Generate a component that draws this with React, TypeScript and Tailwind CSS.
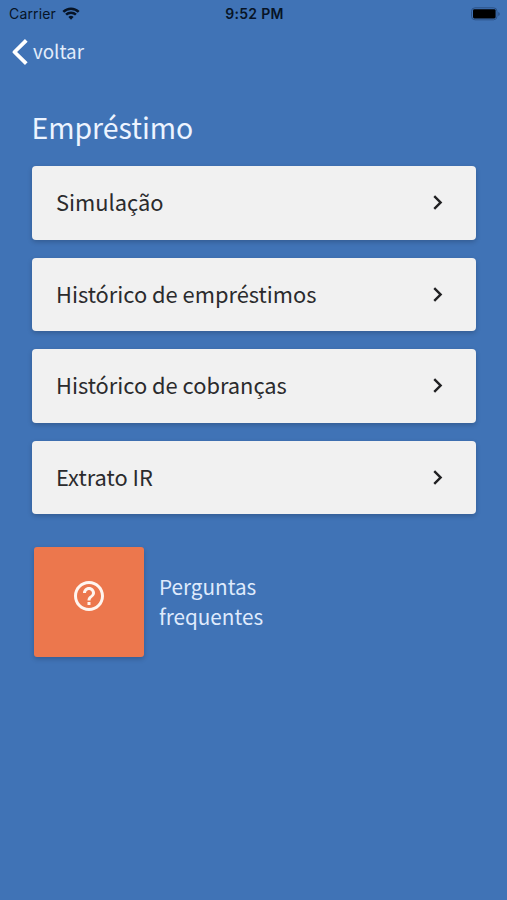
import { MdHelpOutline, MdKeyboardArrowRight } from "react-icons/md";

const menuItems = [
  "Simulação",
  "Histórico de empréstimos",
  "Histórico de cobranças",
  "Extrato IR",
];

function StatusBar() {
  return (
    <div className="grid h-7 grid-cols-3 items-center pb-px pl-[9px] pr-[7px] font-['Inter',sans-serif] text-[#071426]">
      <div className="flex items-center gap-[6px]">
        <span className="text-[14px] leading-5 tracking-[0.15px]">Carrier</span>
        <svg className="h-[13px] w-[18px]" viewBox="0 0 19 14" fill="none" stroke="currentColor" strokeWidth="2.7">
          <path d="M1.2 5.2a11.8 11.8 0 0 1 16.6 0" />
          <path d="M4.2 8.3a7.5 7.5 0 0 1 10.6 0" />
          <path d="M9.5 13.6 6.7 10.7a4 4 0 0 1 5.6 0z" fill="currentColor" stroke="none" />
        </svg>
      </div>
      <span className="whitespace-nowrap text-center text-[14px] font-semibold leading-5 tracking-[0.3px]">9:52 PM</span>
      <svg className="h-[14px] w-[29px] justify-self-end" viewBox="0 0 29 14">
        <rect x="0.5" y="0.8" width="25.5" height="12" rx="3.5" fill="none" stroke="#2b5288" />
        <rect x="2" y="2.2" width="22.6" height="9.2" rx="1.4" fill="#000" />
        <path d="M27.2 5v4q1.6-.6 1.6-2t-1.6-2z" fill="#2b5288" />
      </svg>
    </div>
  );
}

function MenuCard({ label }: { label: string }) {
  return (
    <button className="flex h-[73.5px] w-full items-center justify-between rounded-[4px] bg-[#f1f1f1] pl-[24.5px] pr-[24px] text-left text-[21.85px] text-[#2b2b2d] shadow-[0_2px_5px_rgba(0,0,0,0.2)]">
      <span>{label}</span>
      <MdKeyboardArrowRight className="size-[29px] text-[#202022]" />
    </button>
  );
}

export default function App() {
  return (
    <main className="h-[900px] w-[507px] overflow-hidden bg-[#4073b6] font-['Noto_Sans_CJK_SC','Noto_Sans',sans-serif]">
      <StatusBar />

      <button className="flex h-12 items-center gap-[5px] pl-3 text-[18.8px] text-[#e3edfb]">
        <svg className="h-[26px] w-4" viewBox="0 0 16 26" fill="none" stroke="#fff" strokeWidth="3.8" strokeLinejoin="round">
          <path d="M14.3 1.4 2.5 13l11.8 11.6" />
        </svg>
        <span className="-mt-px">voltar</span>
      </button>

      <h1 className="mt-[31px] pl-[31.5px] text-[28.4px] leading-10 text-[#edf4ff]">Empréstimo</h1>

      <div className="mt-[19px] flex flex-col gap-[18px] pl-[31.5px] pr-[31px]">
        {menuItems.map((item) => (
          <MenuCard key={item} label={item} />
        ))}
      </div>

      <button className="mt-[33px] flex items-center gap-[15px] pl-[34px] text-left">
        <span className="flex size-[110px] justify-center rounded-[3px] bg-[#ec774d] pt-[31px] shadow-[0_2px_5px_rgba(0,0,0,0.2)]">
          <MdHelpOutline className="size-9 text-[#fff5ef]" />
        </span>
        <span className="w-[120px] pb-[2px] text-[20.7px] leading-[30px] text-[#dfeafc]">Perguntas frequentes</span>
      </button>
    </main>
  );
}
